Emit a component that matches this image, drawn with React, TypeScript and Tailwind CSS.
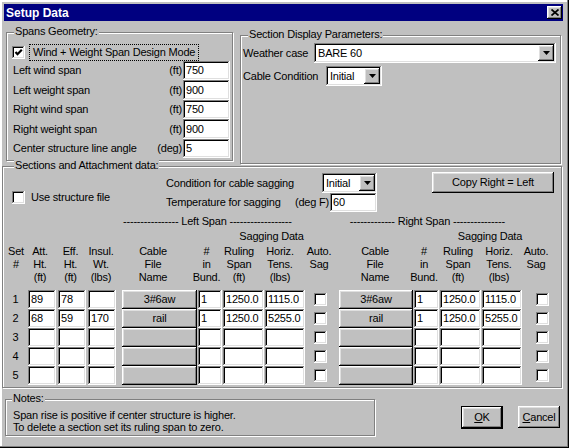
import { clsx } from "clsx";

// Win95 bevels
const RAISED =
    "bg-[#c0c0c0] shadow-[inset_-1px_-1px_0_#000000,inset_1px_1px_0_#ffffff,inset_-2px_-2px_0_#808080,inset_2px_2px_0_#dfdfdf]";
const SUNKEN =
    "bg-white shadow-[inset_-1px_-1px_0_#ffffff,inset_1px_1px_0_#808080,inset_-2px_-2px_0_#dfdfdf,inset_2px_2px_0_#000000]";
const GROUP = "relative border border-[#808080] shadow-[1px_1px_0_#ffffff,inset_1px_1px_0_#ffffff]";
const LEGEND = "absolute top-[-8px] px-[1px] bg-[#c0c0c0] leading-[13px] whitespace-nowrap";

function Field({ className, value }: { className: string; value?: string }) {
    return (
        <div className={clsx(SUNKEN, "flex items-center pl-[3px] overflow-hidden whitespace-nowrap shrink-0", className)}>
            {value}
        </div>
    );
}

function Check({ checked = false }: { checked?: boolean }) {
    return (
        <div className={clsx(SUNKEN, "w-[13px] h-[13px] shrink-0 flex items-center justify-center")}>
            {checked && (
                <svg width="9" height="9" viewBox="0 0 9 9">
                    <path d="M1.5 4 L3.5 6.2 L7.8 1.8" fill="none" stroke="#000" strokeWidth="2.2" />
                </svg>
            )}
        </div>
    );
}

function Arrow() {
    return (
        <div className={clsx(RAISED, "w-[16px] h-[16px] shrink-0 flex items-center justify-center")}>
            <svg width="7" height="4" viewBox="0 0 7 4">
                <path d="M0 0H7L3.5 4Z" fill="#000" />
            </svg>
        </div>
    );
}

function Combo({ className, value }: { className: string; value: string }) {
    return (
        <div className={clsx(SUNKEN, "h-[20px] shrink-0 flex items-center pl-[4px] pr-[2px]", className)}>
            <span className="flex-1 whitespace-nowrap">{value}</span>
            <Arrow />
        </div>
    );
}

const spans = [
    ["Left wind span", "(ft)", "750"],
    ["Left weight span", "(ft)", "900"],
    ["Right wind span", "(ft)", "750"],
    ["Right weight span", "(ft)", "900"],
    ["Center structure line angle", "(deg)", "5"],
];

type Row = {
    att: string;
    eff: string;
    insul: string;
    cable: string;
    bund: string;
    ruling: string;
    horiz: string;
};

const EMPTY: Row = { att: "", eff: "", insul: "", cable: "", bund: "", ruling: "", horiz: "" };

const rows: Row[] = [
    { att: "89", eff: "78", insul: "", cable: "3#6aw", bund: "1", ruling: "1250.0", horiz: "1115.0" },
    { att: "68", eff: "59", insul: "170", cable: "rail", bund: "1", ruling: "1250.0", horiz: "5255.0" },
    EMPTY,
    EMPTY,
    EMPTY,
];

function Head({ className, lines }: { className: string; lines: string[] }) {
    return (
        <div className={clsx("shrink-0 flex flex-col items-center whitespace-nowrap", className)}>
            {lines.map((l) => (
                <span key={l}>{l}</span>
            ))}
        </div>
    );
}

function CableBtn({ className, value }: { className: string; value: string }) {
    return (
        <div className={clsx(RAISED, "h-full shrink-0 flex items-center justify-center", className)}>{value}</div>
    );
}

export default function App() {
    return (
        <div className="w-[569px] h-[448px] bg-[#c0c0c0] text-black text-[11px] tracking-[-0.2px] leading-[13px] font-['Liberation_Sans',Arial,sans-serif] overflow-hidden shadow-[inset_-1px_-1px_0_#000000,inset_-2px_-2px_0_#808080,inset_2px_2px_0_#ffffff,inset_1px_1px_0_#dfdfdf] flex flex-col">
            {/* Title bar */}
            <div className="mt-[4px] ml-[4px] w-[559px] h-[17px] bg-[#000080] flex items-center pl-[2px] pr-[1px]">
                <span className="flex-1 text-white font-bold text-[12px] tracking-normal leading-none">Setup Data</span>
                <div className={clsx(RAISED, "w-[15px] h-[13px] flex items-center justify-center")}>
                    <svg width="8" height="7" viewBox="0 0 8 7">
                        <path d="M0.5 0.5 L7.5 6.5 M7.5 0.5 L0.5 6.5" stroke="#000" strokeWidth="1.7" />
                    </svg>
                </div>
            </div>

            {/* Top groups */}
            <div className="flex items-start mt-[11px]">
                <div className={clsx(GROUP, "ml-[6px] w-[227px] h-[129px] pt-[10px] pl-[5px] pr-[2px] flex flex-col")}>
                    <span className={clsx(LEGEND, "left-[7px]")}>Spans Geometry:</span>
                    <div className="h-[18px] flex items-center">
                        <Check checked />
                        <div className="ml-[4px] h-[17px] w-[170px] px-[3px] flex items-center border border-dotted border-black whitespace-nowrap">
                            Wind + Weight Span Design Mode
                        </div>
                    </div>
                    {spans.map(([label, unit, value], i) => (
                        <div key={label} className={clsx("flex items-center", i % 2 ? "h-[20px]" : "h-[19px]")}>
                            <span className="flex-1 pl-[1px] whitespace-nowrap">{label}</span>
                            <span className="mr-[1px]">{unit}</span>
                            <Field className="w-[47px] h-full" value={value} />
                        </div>
                    ))}
                </div>

                <div className={clsx(GROUP, "ml-[7px] mt-[3px] w-[321px] h-[129px] pt-[7px] pl-[2px] flex flex-col")}>
                    <span className={clsx(LEGEND, "left-[7px]")}>Section Display Parameters:</span>
                    <div className="flex items-center">
                        <span className="w-[71px] whitespace-nowrap">Weather case</span>
                        <Combo className="w-[242px]" value="BARE 60" />
                    </div>
                    <div className="flex items-center mt-[3px]">
                        <span className="w-[83px] whitespace-nowrap">Cable Condition</span>
                        <Combo className="w-[56px]" value="Initial" />
                    </div>
                </div>
            </div>

            {/* Sections and Attachment data */}
            <div className={clsx(GROUP, "ml-[2px] mt-[2px] w-[560px] h-[222px] pt-[5px] flex flex-col")}>
                <span className={clsx(LEGEND, "left-[11px]")}>Sections and Attachment data:</span>

                <div className="flex items-start">
                    <div className="w-[163px] pl-[9px] pt-[19px] flex items-center">
                        <Check />
                        <span className="ml-[6px] whitespace-nowrap">Use structure file</span>
                    </div>
                    <div className="w-[211px] mt-[1px] flex flex-col">
                        <div className="h-[20px] flex items-center">
                            <span className="flex-1 whitespace-nowrap">Condition for cable sagging</span>
                            <Combo className="w-[55px]" value="Initial" />
                        </div>
                        <div className="h-[19px] flex items-center">
                            <span className="flex-1 whitespace-nowrap">Temperature for sagging</span>
                            <span className="mr-[1px] whitespace-nowrap">(deg F)</span>
                            <Field className="w-[47px] h-full" value="60" />
                        </div>
                    </div>
                    <div className={clsx(RAISED, "ml-[55px] w-[122px] h-[21px] flex items-center justify-center")}>
                        Copy Right = Left
                    </div>
                </div>

                {/* span titles */}
                <div className="flex mt-[3px] h-[13px] whitespace-nowrap">
                    <span className="ml-[120px]">---------------- Left Span ------------------</span>
                    <span className="ml-[58px]">------------- Right Span ---------------</span>
                </div>

                <div className="flex mt-[2px] h-[13px]">
                    <span className="ml-[228px] w-[81px] text-center whitespace-nowrap">Sagging Data</span>
                    <span className="ml-[138px] w-[80px] text-center whitespace-nowrap">Sagging Data</span>
                </div>

                {/* column headers */}
                <div className="flex mt-[2px] pl-[1px] h-[39px]">
                    <Head className="w-[24px]" lines={["Set", "#"]} />
                    <Head className="w-[24px]" lines={["Att.", "Ht.", "(ft)"]} />
                    <Head className="w-[37px]" lines={["Eff.", "Ht.", "(ft)"]} />
                    <Head className="w-[24px]" lines={["Insul.", "Wt.", "(lbs)"]} />
                    <Head className="w-[80px]" lines={["Cable", "File", "Name"]} />
                    <Head className="w-[27px]" lines={["#", "in", "Bund."]} />
                    <Head className="w-[38px]" lines={["Ruling", "Span", "(ft)"]} />
                    <Head className="w-[44px]" lines={["Horiz.", "Tens.", "(lbs)"]} />
                    <Head className="w-[34px]" lines={["Auto.", "Sag"]} />
                    <Head className="w-[78px]" lines={["Cable", "File", "Name"]} />
                    <Head className="w-[20px]" lines={["#", "in", "Bund."]} />
                    <Head className="w-[48px]" lines={["Ruling", "Span", "(ft)"]} />
                    <Head className="w-[34px]" lines={["Horiz.", "Tens.", "(lbs)"]} />
                    <Head className="w-[40px]" lines={["Auto.", "Sag"]} />
                </div>

                {/* data rows */}
                <div className="mt-[6px] flex flex-col">
                    {rows.map((r, i) => (
                        <div key={i} className="h-[19px] flex items-center">
                            <span className="w-[25px] text-center">{i + 1}</span>
                            <Field className="w-[28px] h-full" value={r.att} />
                            <Field className="ml-[2px] w-[28px] h-full" value={r.eff} />
                            <Field className="ml-[2px] w-[28px] h-full" value={r.insul} />
                            <CableBtn className="ml-[6px] w-[75px]" value={r.cable} />
                            <Field className="ml-[1px] w-[24px] h-full" value={r.bund} />
                            <Field className="ml-[1px] w-[41px] h-full" value={r.ruling} />
                            <Field className="ml-[1px] w-[40px] h-full" value={r.horiz} />
                            <div className="ml-[9px]">
                                <Check />
                            </div>
                            <CableBtn className="ml-[12px] w-[74px]" value={r.cable} />
                            <Field className="ml-[1px] w-[25px] h-full" value={r.bund} />
                            <Field className="ml-[1px] w-[41px] h-full" value={r.ruling} />
                            <Field className="ml-[1px] w-[40px] h-full" value={r.horiz} />
                            <div className="ml-[14px]">
                                <Check />
                            </div>
                        </div>
                    ))}
                </div>
            </div>

            {/* Notes + buttons */}
            <div className="flex items-start mt-[11px]">
                <div className={clsx(GROUP, "ml-[5px] w-[370px] h-[37px] pt-[9px] pl-[7px] leading-[12px]")}>
                    <span className={clsx(LEGEND, "left-[6px]")}>Notes:</span>
                    <div className="whitespace-nowrap">Span rise is positive if center structure is higher.</div>
                    <div className="whitespace-nowrap">To delete a section set its ruling span to zero.</div>
                </div>
                <div className="ml-[86px] mt-[7px] w-[42px] h-[23px] border border-black">
                    <div className={clsx(RAISED, "w-full h-full flex items-center justify-center")}>
                        <span>
                            <span className="underline">O</span>K
                        </span>
                    </div>
                </div>
                <div className={clsx(RAISED, "ml-[15px] mt-[7px] w-[42px] h-[22px] flex items-center justify-center")}>
                    <span>
                        <span className="underline">C</span>ancel
                    </span>
                </div>
            </div>
        </div>
    );
}
